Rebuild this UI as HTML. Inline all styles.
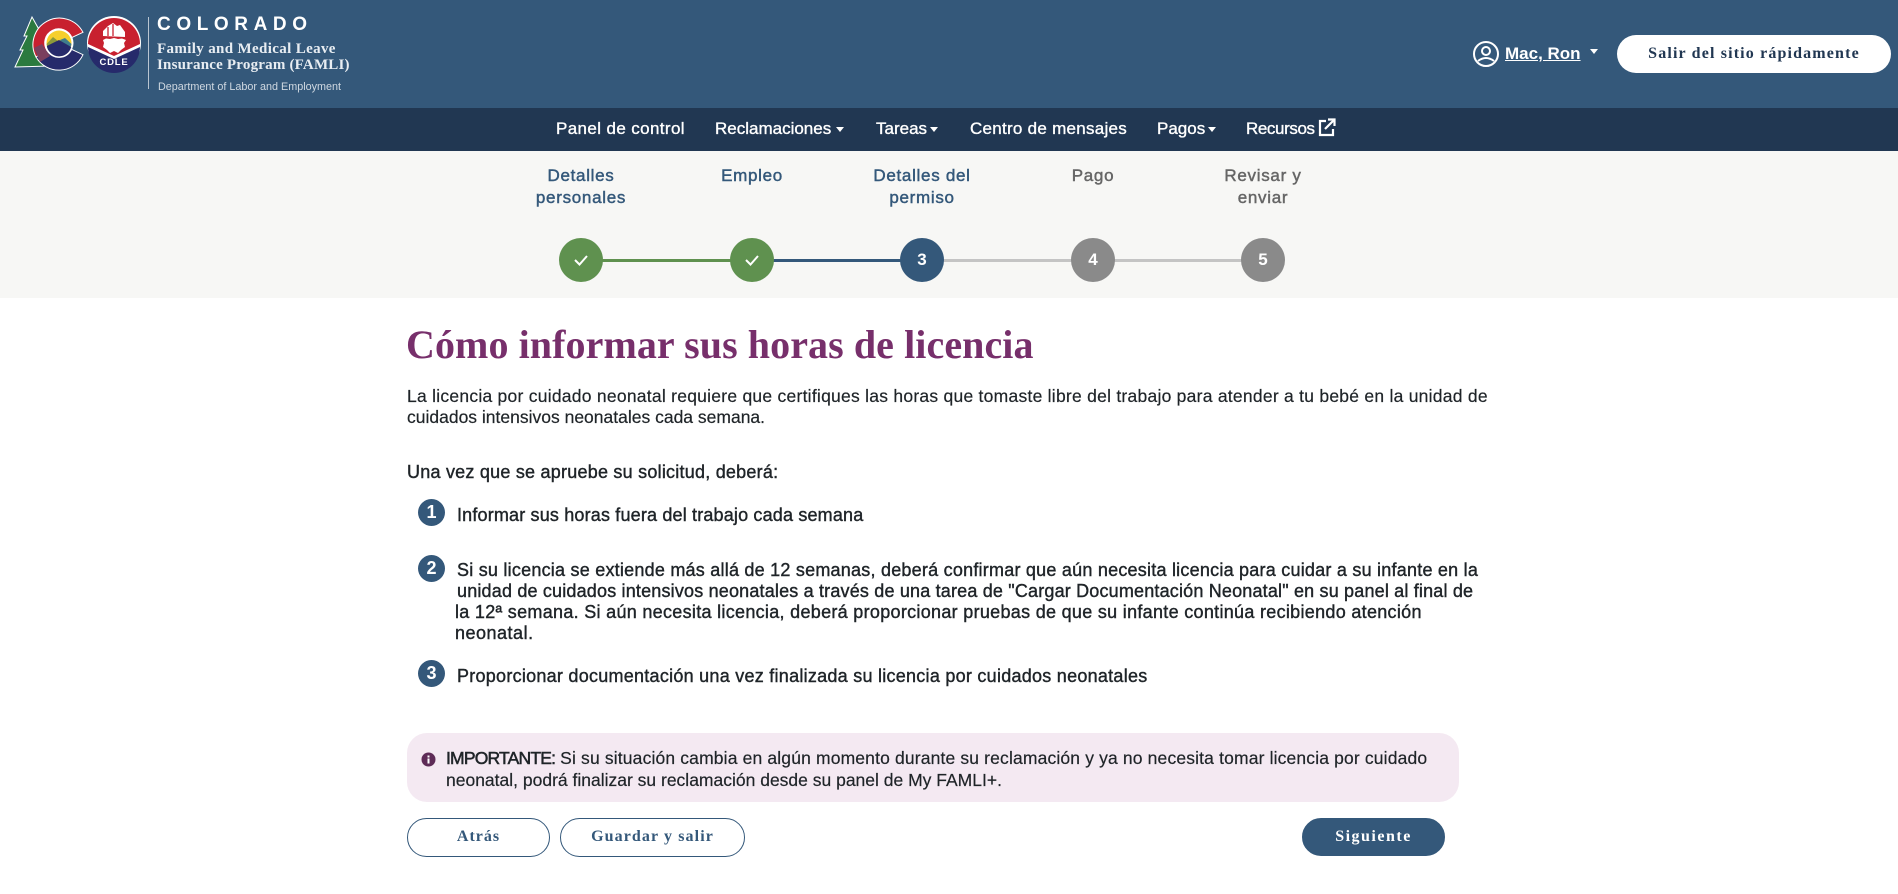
<!DOCTYPE html>
<html lang="es"><head><meta charset="utf-8"><title>Cómo informar sus horas de licencia</title>
<style>
html,body{margin:0;padding:0;background:#fff}
#p{position:relative;width:1898px;height:894px;overflow:hidden;background:#fff;font-family:"Liberation Sans",sans-serif;color:#1f2428}
.t{position:absolute;white-space:nowrap;line-height:20px;font-size:17px}
.s{font-family:"Liberation Serif",serif;font-weight:700}
.bar{position:absolute;left:0;width:1898px}
.n{color:#fff;top:119px;-webkit-text-stroke:.35px #fff}
.l{font-size:17px;color:#34587a;text-align:center;width:200px;letter-spacing:.7px;-webkit-text-stroke:.45px #34587a}
.g{color:#666;-webkit-text-stroke:.45px #666}
.c{position:absolute;width:44px;height:44px;border-radius:50%;top:238px;color:#fff;text-align:center;line-height:44px;font-size:17px;font-weight:700}
.ln{position:absolute;top:259px;height:3px}
.k{position:absolute;width:27px;height:27px;border-radius:50%;background:#34587a;color:#fff;text-align:center;line-height:26px;font-size:18px;font-weight:700;left:418px}
.b{position:absolute;box-sizing:border-box;border-radius:20px;top:818px;height:39px;border:1px solid #34587a;background:#fff;color:#34587a;text-align:center;line-height:35px;font-family:"Liberation Serif",serif;font-weight:700;font-size:16px;letter-spacing:1px}
.m{font-weight:400;font-size:18px;-webkit-text-stroke:.4px #1f2428}
.p{font-size:17.500px;-webkit-text-stroke:.2px #1f2428}
.car{position:absolute;width:0;height:0;border-left:4.5px solid transparent;border-right:4.5px solid transparent;border-top:5px solid #fff}
</style></head><body><div id="p">
<div class="bar" style="top:0;height:108px;background:#34587a"></div>
<div class="bar" style="top:108px;height:43px;background:#213752"></div>
<div class="bar" style="top:151px;height:147px;background:#f7f7f5"></div>

<svg style="position:absolute;left:0;top:0" width="150" height="100" viewBox="0 0 150 100">
<path d="M32 17 L41 33 L38 33 L46 46 L50 66 L15 67 L23 50 L20 50 L27 36 L24 36 Z" fill="#2b7a3f" stroke="#fff" stroke-width="1"/>
<path d="M83 32.300 A26.500 26.500 0 1 0 36 57 L47 50.500 A14 14 0 1 1 71.700 37.600 Z" fill="#c8202f" stroke="#fff" stroke-width="1"/>
<path d="M83 54.700 A26.500 26.500 0 0 1 36 57 L47 50.500 A14 14 0 0 0 71.700 49.400 Z" fill="#262a6b" stroke="#fff" stroke-width="1"/>
<path d="M34 48 L42 44 L50 56 L40 62 Z" fill="#7a3f5e"/>
<circle cx="59" cy="43" r="14.500" fill="#fff"/>
<circle cx="59" cy="43" r="12.500" fill="#f6cf2c"/>
<path d="M46.600 44 L53 37 L58 41 L65 39 L71.500 45 L60 53 L48 50 Z" fill="#8c9a3a"/>
<path d="M60 40 L65 38 L71.500 44 L70 49 Z" fill="#3f7d8c"/>
<path d="M46.800 46 L59 40 L71.200 47 A12.500 12.500 0 0 1 46.800 46 Z" fill="#262a6b"/>
<circle cx="114" cy="43" r="27" fill="#fff"/>
<path d="M88 44 A26 26 0 0 1 140 44 L114 56 Z" fill="#c8202f"/>
<path d="M88 47 L114 59 L140 47 A26 26 0 0 1 88 47 Z" fill="#262a6b"/>
<path d="M103 40 L106 38.500 L110 39 L114 38 L118 39 L122 38.500 L126 40 L124 43 L125 47 L121 50 L118 53 L114 51 L110 53 L107 50 L103 47 L104 43 Z" fill="#fff"/>
<path d="M103 36 L103 31 L108 26 L113 23 L117 26 L120 25 L125 32 L125 37 Z" fill="#fff"/>
<path d="M108 27 L108 36 M113 24 L113 36" stroke="#c8202f" stroke-width="1.300"/>
<text x="114" y="65" font-family="Liberation Sans" font-weight="700" font-size="9.500" fill="#fff" text-anchor="middle" letter-spacing=".8">CDLE</text>
<rect x="148" y="17" width="1" height="72" fill="#b9c5d1"/>
</svg>

<div class="t" style="left:157px;top:15px;color:#fff;font-weight:700;font-size:19px;letter-spacing:5.6px">COLORADO</div>
<div class="t s" style="left:157px;top:39px;color:#e8edf2;font-size:15px;letter-spacing:.35px">Family and Medical Leave</div>
<div class="t s" style="left:157px;top:55px;color:#e8edf2;font-size:15px;letter-spacing:.2px">Insurance Program (FAMLI)</div>
<div class="t" style="left:158px;top:77px;color:#cfd8e1;font-size:10.800px">Department of Labor and Employment</div>

<svg style="position:absolute;left:1472px;top:40px" width="28" height="28" viewBox="0 0 28 28" fill="none" stroke="#fff" stroke-width="2"><circle cx="14" cy="14" r="12"/><circle cx="14" cy="11" r="4"/><path d="M6 21 Q14 15 22 21"/></svg>
<div class="t" style="left:1505px;top:44px;color:#fff;font-size:17px;font-weight:700;text-decoration:underline;padding-right:4px">Mac, Ron</div>
<div class="car" style="left:1590px;top:49px"></div>
<div class="b" style="left:1617px;top:35px;width:274px;height:38px;border:0;line-height:38px;color:#213752;font-size:16px;border-radius:19px;letter-spacing:1.15px">Salir del sitio rápidamente</div>

<div class="t n" style="left:556px;letter-spacing:.38px">Panel de control</div>
<div class="t n" style="left:715px">Reclamaciones</div><div class="car" style="left:836px;top:127px"></div>
<div class="t n" style="left:876px">Tareas</div><div class="car" style="left:930px;top:127px"></div>
<div class="t n" style="left:970px;letter-spacing:.27px">Centro de mensajes</div>
<div class="t n" style="left:1157px">Pagos</div><div class="car" style="left:1208px;top:127px"></div>
<div class="t n" style="left:1246px;letter-spacing:-.4px">Recursos</div>
<svg style="position:absolute;left:1318px;top:118px" width="18" height="19" viewBox="0 0 18 19" fill="none" stroke="#fff" stroke-width="2.200"><path d="M8 3 H2 V17 H15 V11"/><path d="M7 11 L16 2"/><path d="M10 1.500 H16.500 V8" /></svg>

<div class="t l" style="left:481px;top:166px">Detalles</div>
<div class="t l" style="left:481px;top:188px">personales</div>
<div class="t l" style="left:652px;top:166px">Empleo</div>
<div class="t l" style="left:822px;top:166px">Detalles del</div>
<div class="t l" style="left:822px;top:188px">permiso</div>
<div class="t l g" style="left:993px;top:166px">Pago</div>
<div class="t l g" style="left:1163px;top:166px">Revisar y</div>
<div class="t l g" style="left:1163px;top:188px">enviar</div>

<div class="ln" style="left:581px;width:171px;background:#5f914f"></div>
<div class="ln" style="left:752px;width:170px;background:#34587a"></div>
<div class="ln" style="left:922px;width:341px;background:#c4c4c4"></div>
<div class="c" style="left:559px;background:#5f914f"><svg width="18" height="44" viewBox="0 0 18 44" fill="none" stroke="#fff" stroke-width="2"><path d="M3 22 L7.500 26.500 L15 18"/></svg></div>
<div class="c" style="left:730px;background:#5f914f"><svg width="18" height="44" viewBox="0 0 18 44" fill="none" stroke="#fff" stroke-width="2"><path d="M3 22 L7.500 26.500 L15 18"/></svg></div>
<div class="c" style="left:900px;background:#34587a">3</div>
<div class="c" style="left:1071px;background:#8a8a8a">4</div>
<div class="c" style="left:1241px;background:#8a8a8a">5</div>

<div class="t s" style="left:406px;top:323px;font-size:40px;line-height:44px;color:#772f6b;letter-spacing:.08px">Cómo informar sus horas de licencia</div>
<div class="t p" style="left:407px;top:386px;letter-spacing:.25px">La licencia por cuidado neonatal requiere que certifiques las horas que tomaste libre del trabajo para atender a tu bebé en la unidad de</div>
<div class="t p" style="left:407px;top:407px">cuidados intensivos neonatales cada semana.</div>
<div class="t m" style="left:407px;top:462px;letter-spacing:.23px">Una vez que se apruebe su solicitud, deberá:</div>

<div class="k" style="top:499px">1</div>
<div class="t m" style="left:457px;top:505px;letter-spacing:.17px">Informar sus horas fuera del trabajo cada semana</div>
<div class="k" style="top:555px">2</div>
<div class="t m" style="left:457px;top:560px;letter-spacing:.23px">Si su licencia se extiende más allá de 12 semanas, deberá confirmar que aún necesita licencia para cuidar a su infante en la</div>
<div class="t m" style="left:457px;top:581px;letter-spacing:.18px">unidad de cuidados intensivos neonatales a través de una tarea de "Cargar Documentación Neonatal" en su panel al final de</div>
<div class="t m" style="left:455px;top:602px;letter-spacing:.3px">la 12ª semana. Si aún necesita licencia, deberá proporcionar pruebas de que su infante continúa recibiendo atención</div>
<div class="t m" style="left:455px;top:623px;letter-spacing:.5px">neonatal.</div>
<div class="k" style="top:660px">3</div>
<div class="t m" style="left:457px;top:666px;letter-spacing:.26px">Proporcionar documentación una vez finalizada su licencia por cuidados neonatales</div>

<div style="position:absolute;left:407px;top:733px;width:1052px;height:69px;border-radius:20px;background:#f4e9f2"></div>
<svg style="position:absolute;left:421px;top:752px" width="15" height="15" viewBox="0 0 15 15"><circle cx="7.500" cy="7.500" r="7" fill="#5e2b57"/><rect x="6.500" y="6.500" width="2" height="5" fill="#fff"/><rect x="6.500" y="3.500" width="2" height="2" fill="#fff"/></svg>
<div class="t p" style="left:446px;top:748px;letter-spacing:.15px"><span style="letter-spacing:-.8px;-webkit-text-stroke:.55px #1f2428">IMPORTANTE:</span> Si su situación cambia en algún momento durante su reclamación y ya no necesita tomar licencia por cuidado</div>
<div class="t p" style="left:446px;top:770px">neonatal, podrá finalizar su reclamación desde su panel de My FAMLI+.</div>

<div class="b" style="left:407px;width:143px">Atrás</div>
<div class="b" style="left:560px;width:185px;letter-spacing:1.1px">Guardar y salir</div>
<div class="b" style="left:1302px;width:143px;height:38px;background:#34587a;color:#fff;letter-spacing:1.5px">Siguiente</div>
</div></body></html>
